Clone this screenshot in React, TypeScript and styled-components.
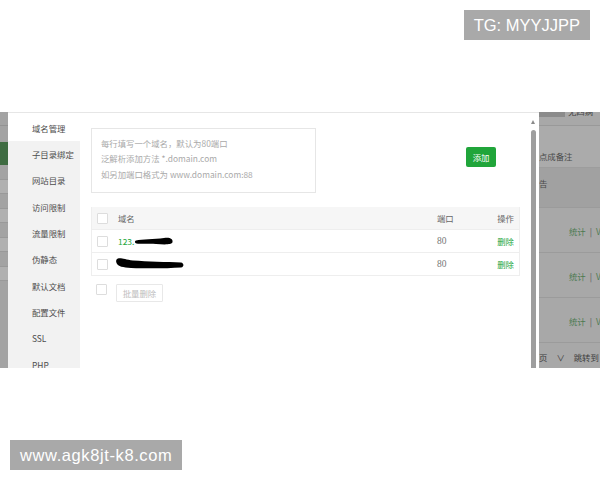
import React from 'react';
import styled, { createGlobalStyle } from 'styled-components';

const GlobalStyle = createGlobalStyle`
  html, body {
    margin: 0;
    padding: 0;
    background: #fff;
  }
  body {
    font-family: "Noto Sans CJK SC", "Noto Sans", sans-serif;
  }
  * {
    box-sizing: border-box;
  }
`;

const Page = styled.div`
  width: 600px;
  height: 480px;
  display: flex;
  flex-direction: column;
  background: #fff;
  overflow: hidden;
`;

const TopArea = styled.div`
  height: 112px;
  display: flex;
  justify-content: flex-end;
  align-items: flex-start;
  padding: 10px 10px 0 0;
`;

const BottomArea = styled.div`
  height: 112px;
  display: flex;
  align-items: flex-start;
  padding: 72px 0 0 10px;
`;

const Watermark = styled.div<{ $spacing?: number }>`
  height: 30px;
  padding: 0 10px;
  background: #a9a9a9;
  color: #fff;
  font-family: "Liberation Sans", Arial, sans-serif;
  font-size: 16.5px;
  line-height: 30px;
  letter-spacing: ${(p) => p.$spacing ?? 0}px;
  white-space: nowrap;
`;

const Shot = styled.div`
  height: 256px;
  display: flex;
  overflow: hidden;
`;

/* dimmed page behind the dialog */
const LeftDim = styled.div`
  width: 8px;
  background: #a3a3a3;
  display: flex;
  flex-direction: column;
`;

const DimLine = styled.div<{ $top: number }>`
  margin-top: ${(p) => p.$top}px;
  height: 1px;
  background: #939393;
`;

const DimGreen = styled.div`
  margin-top: 16px;
  height: 23px;
  background: #3f6c42;
`;

const DimBox = styled.div`
  margin-top: 14px;
  height: 15px;
  background: #b0b0b0;
  border-top: 1px solid #999;
  border-bottom: 1px solid #999;
`;

const RightDim = styled.div`
  flex: 1;
  background: #a8a8a8;
  display: flex;
  flex-direction: column;
  font-size: 8.4px;
  color: #4a4a4a;
  overflow: hidden;
  white-space: nowrap;
`;

const DimTabs = styled.div`
  height: 14px;
  display: flex;
  align-items: flex-start;
  border-bottom: 1px solid #999;
  overflow: hidden;
`;

const DimTab = styled.div`
  width: 26px;
  height: 5px;
  background: #8b8b8b;
`;

const DimTabText = styled.div`
  margin: -6px 0 0 3px;
  line-height: 10px;
  color: #444;
`;

const DimFilter = styled.div`
  height: 42px;
  padding-top: 24px;
  line-height: 12px;
  background: #ababab;
  border-bottom: 1px solid #9d9d9d;
`;

const DimHead = styled.div`
  height: 39px;
  padding-top: 9px;
  line-height: 12px;
  background: #a1a1a1;
`;

const DimRow = styled.div`
  height: 45px;
  border-top: 1px solid #9b9b9b;
  padding: 17px 0 0 30px;
  line-height: 12px;
  color: #4c7a50;
`;

const DimSep = styled.span`
  color: #555;
  margin: 0 4px;
`;

const DimFoot = styled.div`
  flex: 1;
  border-top: 1px solid #9b9b9b;
  padding-top: 8px;
  display: flex;
  gap: 9px;
  line-height: 12px;
  color: #3d3d3d;
`;

/* dialog */
const Modal = styled.div`
  width: 531px;
  display: flex;
  background: #fff;
  border-top: 1px solid #e6e6e6;
`;

const Nav = styled.div`
  width: 72px;
  background: #f2f2f2;
  padding-top: 1.5px;
  display: flex;
  flex-direction: column;
`;

const NavItem = styled.div<{ $active?: boolean }>`
  flex: none;
  height: 26.33px;
  padding-left: 24px;
  display: flex;
  align-items: center;
  font-size: 8.4px;
  color: #4d4d4d;
  white-space: nowrap;
  background: ${(p) => (p.$active ? '#fff' : 'transparent')};
  box-shadow: ${(p) => (p.$active ? '0 -2px 0 #fff' : 'none')};
`;

const Content = styled.div`
  flex: 1;
  padding: 15px 7px 0 11px;
  display: flex;
  flex-direction: column;
  font-size: 8.4px;
`;

const InputRow = styled.div`
  display: flex;
  align-items: flex-start;
`;

const DomainBox = styled.div`
  width: 225px;
  height: 65px;
  border: 1px solid #e6e6e6;
  padding: 6.5px 9px;
  line-height: 15.5px;
  color: #a9a9a9;
  white-space: nowrap;
`;

const AddButton = styled.button`
  margin: 19px 0 0 150px;
  width: 30px;
  height: 20px;
  padding: 0;
  border: none;
  border-radius: 2px;
  background: #20a53a;
  color: #fff;
  font-family: inherit;
  font-size: 8.4px;
`;

const Table = styled.div`
  margin-top: 14px;
  width: 429px;
  border: 1px solid #eee;
  border-top: none;
`;

const Row = styled.div<{ $head?: boolean }>`
  display: grid;
  grid-template-columns: 26px 319px 1fr auto;
  align-items: center;
  height: ${(p) => (p.$head ? 22 : 23)}px;
  padding-right: 5px;
  border-top: ${(p) => (p.$head ? 'none' : '1px solid #eee')};
  background: ${(p) => (p.$head ? '#f6f6f6' : '#fff')};
  color: #666;
  white-space: nowrap;
`;

const Check = styled.span`
  display: block;
  width: 11px;
  height: 11px;
  margin-left: 5px;
  border: 1px solid #ddd;
  border-radius: 1px;
  background: #fff;
`;

const NameCell = styled.div`
  display: flex;
  align-items: center;
  color: #20a53a;
`;

const Port = styled.span`
  color: #777;
  font-family: "Liberation Serif", serif;
  font-size: 9.5px;
`;

const DeleteLink = styled.span`
  color: #20a53a;
`;

const BulkRow = styled.div`
  margin-top: 8px;
  display: flex;
  align-items: flex-start;
`;

const BulkButton = styled.button`
  margin-left: 9px;
  width: 47px;
  height: 18px;
  padding: 0;
  border: 1px solid #e8e8e8;
  border-radius: 1px;
  background: #fff;
  color: #bdbdbd;
  font-family: inherit;
  font-size: 8.4px;
`;

const ScrollCol = styled.div`
  width: 12px;
  padding: 7px 0 0 4px;
  display: flex;
  flex-direction: column;
`;

const ScrollArrow = styled.div`
  width: 0;
  height: 0;
  border-left: 2.5px solid transparent;
  border-right: 2.5px solid transparent;
  border-bottom: 4px solid #8a8a8a;
`;

const ScrollThumb = styled.div`
  margin-top: 6px;
  flex: 1;
  width: 5px;
  border-radius: 3px 3px 0 0;
  background: #9e9e9e;
`;

const navItems = [
  '域名管理',
  '子目录绑定',
  '网站目录',
  '访问限制',
  '流量限制',
  '伪静态',
  '默认文档',
  '配置文件',
  'SSL',
  'PHP',
];

// hand-drawn redaction strokes over the domain names
function Scribble({ variant }: { variant: 1 | 2 }) {
  if (variant === 1) {
    return (
      <svg width="40" height="14" viewBox="0 0 40 14" style={{ marginLeft: 0 }}>
        <path
          d="M2 6.5 C 8 5, 20 5.5, 30 4 C 36 3, 39 5, 38.5 8 C 38 11, 30 10.5, 22 10 C 14 9.5, 6 10, 2.5 9.5 C 0.5 9, 0.5 7, 2 6.5 Z"
          fill="#000"
        />
      </svg>
    );
  }
  return (
    <svg width="70" height="16" viewBox="0 0 70 16" style={{ marginLeft: -3 }}>
      <path
        d="M3 2.5 C 6 1.5, 10 3.5, 18 4.5 C 32 5.5, 52 6, 66 6.5 C 69 7, 69.5 11, 66 11.5 C 52 12.5, 32 12.5, 16 12 C 8 11.5, 3 10.5, 1.5 7 C 0.5 4.5, 1.5 3, 3 2.5 Z"
        fill="#000"
      />
    </svg>
  );
}

export default function App(): JSX.Element {
  return (
    <Page>
      <GlobalStyle />
      <TopArea>
        <Watermark>TG: MYYJJPP</Watermark>
      </TopArea>
      <Shot>
        <LeftDim>
          <DimLine $top={13} />
          <DimGreen />
          <DimBox />
          <DimBox />
          <DimBox />
          <DimBox />
        </LeftDim>
        <Modal>
          <Nav>
            {navItems.map((item, i) => (
              <NavItem key={item} $active={i === 0}>
                {item}
              </NavItem>
            ))}
          </Nav>
          <Content>
            <InputRow>
              <DomainBox>
                每行填写一个域名，默认为80端口
                <br />
                泛解析添加方法 *.domain.com
                <br />
                如另加端口格式为 www.domain.com:88
              </DomainBox>
              <AddButton>添加</AddButton>
            </InputRow>
            <Table>
              <Row $head>
                <Check />
                <span>域名</span>
                <span>端口</span>
                <span>操作</span>
              </Row>
              <Row>
                <Check />
                <NameCell>
                  123.
                  <Scribble variant={1} />
                </NameCell>
                <Port>80</Port>
                <DeleteLink>删除</DeleteLink>
              </Row>
              <Row>
                <Check />
                <NameCell>
                  <Scribble variant={2} />
                </NameCell>
                <Port>80</Port>
                <DeleteLink>删除</DeleteLink>
              </Row>
            </Table>
            <BulkRow>
              <Check />
              <BulkButton>批量删除</BulkButton>
            </BulkRow>
          </Content>
          <ScrollCol>
            <ScrollArrow />
            <ScrollThumb />
          </ScrollCol>
        </Modal>
        <RightDim>
          <DimTabs>
            <DimTab />
            <DimTabText>无四病</DimTabText>
          </DimTabs>
          <DimFilter>点成备注</DimFilter>
          <DimHead>告</DimHead>
          {[0, 1, 2].map((i) => (
            <DimRow key={i}>
              统计<DimSep>|</DimSep>V
            </DimRow>
          ))}
          <DimFoot>
            <span>页</span>
            <span>∨</span>
            <span>跳转到</span>
          </DimFoot>
        </RightDim>
      </Shot>
      <BottomArea>
        <Watermark $spacing={0.6}>www.agk8jt-k8.com</Watermark>
      </BottomArea>
    </Page>
  );
}
